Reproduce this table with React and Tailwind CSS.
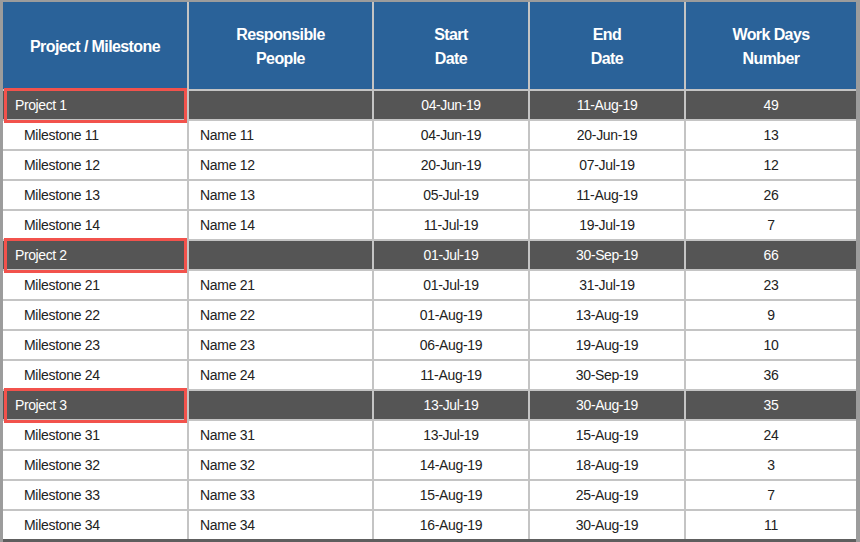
const projects = [
  {
    name: 'Project 1', start: '04-Jun-19', end: '11-Aug-19', days: 49,
    items: [
      ['Milestone 11', 'Name 11', '04-Jun-19', '20-Jun-19', 13],
      ['Milestone 12', 'Name 12', '20-Jun-19', '07-Jul-19', 12],
      ['Milestone 13', 'Name 13', '05-Jul-19', '11-Aug-19', 26],
      ['Milestone 14', 'Name 14', '11-Jul-19', '19-Jul-19', 7],
    ],
  },
  {
    name: 'Project 2', start: '01-Jul-19', end: '30-Sep-19', days: 66,
    items: [
      ['Milestone 21', 'Name 21', '01-Jul-19', '31-Jul-19', 23],
      ['Milestone 22', 'Name 22', '01-Aug-19', '13-Aug-19', 9],
      ['Milestone 23', 'Name 23', '06-Aug-19', '19-Aug-19', 10],
      ['Milestone 24', 'Name 24', '11-Aug-19', '30-Sep-19', 36],
    ],
  },
  {
    name: 'Project 3', start: '13-Jul-19', end: '30-Aug-19', days: 35,
    items: [
      ['Milestone 31', 'Name 31', '13-Jul-19', '15-Aug-19', 24],
      ['Milestone 32', 'Name 32', '14-Aug-19', '18-Aug-19', 3],
      ['Milestone 33', 'Name 33', '15-Aug-19', '25-Aug-19', 7],
      ['Milestone 34', 'Name 34', '16-Aug-19', '30-Aug-19', 11],
    ],
  },
];

const cols = 'grid grid-cols-[184px_183px_154px_154px_170px] gap-x-[2px]';

function HeaderCell({ children }) {
  return (
    <div className="bg-[#2a6299] flex items-center justify-center pt-[3px] text-center text-white font-bold text-[16px] leading-[24px] tracking-[-0.6px]">
      {children}
    </div>
  );
}

function ProjectRow({ p }) {
  return (
    <div className={`${cols} h-[30px] border-t-2 border-[#c4c4c4] bg-[#c4c4c4] text-white text-[14px] tracking-[-0.4px]`}>
      <div className="relative bg-[#555555] flex items-center pl-[12px] pt-[1px]">
        {p.name}
        <div className="absolute top-[-3px] bottom-[-4px] left-[1px] right-0 border-[3px] border-[#f2524c]" />
      </div>
      <div className="bg-[#555555]" />
      <div className="bg-[#555555] flex items-center justify-center pt-[1px]">{p.start}</div>
      <div className="bg-[#555555] flex items-center justify-center pt-[1px]">{p.end}</div>
      <div className="bg-[#555555] flex items-center justify-center pt-[1px]">{p.days}</div>
    </div>
  );
}

function MilestoneRow({ m }) {
  return (
    <div className={`${cols} h-[30px] border-t-2 border-[#c4c4c4] bg-[#c4c4c4] text-[#222222] text-[14px] tracking-[-0.3px]`}>
      <div className="bg-white flex items-center pl-[21px]">{m[0]}</div>
      <div className="bg-white flex items-center pl-[11px]">{m[1]}</div>
      <div className="bg-white flex items-center justify-center">{m[2]}</div>
      <div className="bg-white flex items-center justify-center">{m[3]}</div>
      <div className="bg-white flex items-center justify-center">{m[4]}</div>
    </div>
  );
}

export default function App() {
  return (
    <div className="w-[860px] h-[542px] overflow-hidden bg-[#9c9c9c] pl-[3px] pt-[2px] font-['Liberation_Sans',Arial,sans-serif]">
      <div className="w-[853px] border-b-[3px] border-[#5e5e5e]">
        <div className={`${cols} h-[87px] bg-[#c4c4c4]`}>
          <HeaderCell>Project / Milestone</HeaderCell>
          <HeaderCell>Responsible<br />People</HeaderCell>
          <HeaderCell>Start<br />Date</HeaderCell>
          <HeaderCell>End<br />Date</HeaderCell>
          <HeaderCell>Work Days<br />Number</HeaderCell>
        </div>
        {projects.map((p) => (
          <div key={p.name}>
            <ProjectRow p={p} />
            {p.items.map((m) => (
              <MilestoneRow key={m[0]} m={m} />
            ))}
          </div>
        ))}
      </div>
    </div>
  );
}
